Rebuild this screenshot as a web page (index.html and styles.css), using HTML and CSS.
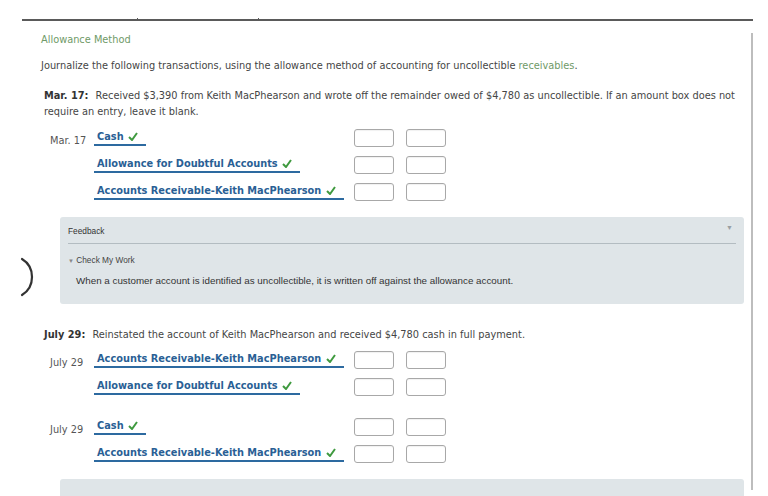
FILE: index.html
```html
<!DOCTYPE html>
<html>
<head>
<meta charset="utf-8">
<link rel="stylesheet" href="styles.css">
</head>
<body>
<div class="topbar"><span class="tick t1"></span><span class="tick t2"></span></div>
<svg class="paren" width="16" height="40" viewBox="0 0 16 40"><path d="M3 2 Q13 8 13 20 Q13 32 3 38" fill="none" stroke="#333" stroke-width="2.2" stroke-linecap="round"/></svg>
<div class="page">
  <div class="title">Allowance Method</div>
  <p class="intro">Journalize the following transactions, using the allowance method of accounting for uncollectible <span class="green">receivables</span>.</p>
  <p class="task"><b>Mar. 17:</b> Received $3,390 from Keith MacPhearson and wrote off the remainder owed of $4,780 as uncollectible. If an amount box does not require an entry, leave it blank.</p>

  <div class="journal j1">
    <div class="row">
      <div class="date">Mar. 17</div>
      <div class="acct"><span class="link">Cash <svg class="ok" width="10" height="9" viewBox="0 0 10 9"><path d="M1 5 L4 8 L9 1" fill="none" stroke="#3f9a3f" stroke-width="2"/></svg></span></div>
      <span class="box"></span><span class="box"></span>
    </div>
    <div class="row">
      <div class="date"></div>
      <div class="acct"><span class="link">Allowance for Doubtful Accounts <svg class="ok" width="10" height="9" viewBox="0 0 10 9"><path d="M1 5 L4 8 L9 1" fill="none" stroke="#3f9a3f" stroke-width="2"/></svg></span></div>
      <span class="box"></span><span class="box"></span>
    </div>
    <div class="row">
      <div class="date"></div>
      <div class="acct"><span class="link">Accounts Receivable-Keith MacPhearson <svg class="ok" width="10" height="9" viewBox="0 0 10 9"><path d="M1 5 L4 8 L9 1" fill="none" stroke="#3f9a3f" stroke-width="2"/></svg></span></div>
      <span class="box"></span><span class="box"></span>
    </div>
  </div>

  <div class="feedback">
    <div class="fb-head">Feedback<span class="fb-arrow">▼</span></div>
    <div class="fb-sub"><span class="tri">▼</span> Check My Work</div>
    <div class="fb-text">When a customer account is identified as uncollectible, it is written off against the allowance account.</div>
  </div>

  <p class="task task2"><b>July 29:</b> Reinstated the account of Keith MacPhearson and received $4,780 cash in full payment.</p>

  <div class="journal j2">
    <div class="row">
      <div class="date">July 29</div>
      <div class="acct"><span class="link">Accounts Receivable-Keith MacPhearson <svg class="ok" width="10" height="9" viewBox="0 0 10 9"><path d="M1 5 L4 8 L9 1" fill="none" stroke="#3f9a3f" stroke-width="2"/></svg></span></div>
      <span class="box"></span><span class="box"></span>
    </div>
    <div class="row">
      <div class="date"></div>
      <div class="acct"><span class="link">Allowance for Doubtful Accounts <svg class="ok" width="10" height="9" viewBox="0 0 10 9"><path d="M1 5 L4 8 L9 1" fill="none" stroke="#3f9a3f" stroke-width="2"/></svg></span></div>
      <span class="box"></span><span class="box"></span>
    </div>
  </div>
  <div class="journal j3">
    <div class="row">
      <div class="date">July 29</div>
      <div class="acct"><span class="link">Cash <svg class="ok" width="10" height="9" viewBox="0 0 10 9"><path d="M1 5 L4 8 L9 1" fill="none" stroke="#3f9a3f" stroke-width="2"/></svg></span></div>
      <span class="box"></span><span class="box"></span>
    </div>
    <div class="row">
      <div class="date"></div>
      <div class="acct"><span class="link">Accounts Receivable-Keith MacPhearson <svg class="ok" width="10" height="9" viewBox="0 0 10 9"><path d="M1 5 L4 8 L9 1" fill="none" stroke="#3f9a3f" stroke-width="2"/></svg></span></div>
      <span class="box"></span><span class="box"></span>
    </div>
  </div>
  <div class="feedback bottom"></div>
</div>
</body>
</html>
```

FILE: styles.css
```css
html, body {
  margin: 0;
  padding: 0;
  background: #fff;
  width: 768px;
  height: 496px;
  overflow: hidden;
}
body {
  font-family: "DejaVu Sans", Verdana, sans-serif;
  color: #454545;
  position: relative;
}
.topbar {
  margin: 19px 0 0 22px;
  width: 731px;
  height: 0;
  border-top: 2px solid #5a5a5a;
  position: relative;
}
.tick {
  position: absolute;
  top: -3px;
  width: 1px;
  height: 2px;
  background: #5a5a5a;
}
.t1 { left: 115px; }
.t2 { left: 236px; }
.paren {
  position: absolute;
  left: 19px;
  top: 257px;
}
.page {
  margin: 12px 0 0 22px;
  width: 710px;
  height: 457px;
  border-right: 2px solid #bdbdbd;
  padding: 0 0 0 19px;
}
.title {
  font-size: 9.8px;
  line-height: 12px;
  padding-top: 1px;
  color: #6f9a67;
}
.intro {
  margin: 13px 0 0 0;
  font-size: 9.8px;
  line-height: 14px;
}
.green { color: #6f9a67; }
.task {
  margin: 15px 0 0 3px;
  font-size: 9.8px;
  line-height: 16px;
  width: 705px;
}
.task b {
  color: #333;
  font-weight: bold;
  margin-right: 4px;
}
.journal { margin-left: 9px; }
.j1 { margin-top: 7px; }
.row {
  display: flex;
  align-items: flex-start;
  height: 27px;
}
.date {
  width: 44px;
  font-size: 9.8px;
  padding-top: 7px;
  line-height: 14px;
  color: #555;
}
.acct {
  width: 260px;
  margin-top: -2px;
}
.link {
  display: inline-block;
  font-weight: bold;
  font-size: 9.8px;
  line-height: 11px;
  color: #2a5f95;
  border-bottom: 2px solid #2d6aa0;
  padding: 0 8px 2px 3px;
}
.ok {
  display: inline-block;
  vertical-align: -1px;
  margin-left: 1px;
}
.box {
  width: 38px;
  height: 16px;
  border: 1px solid #a8a8a8;
  border-radius: 3px;
  margin-top: 2px;
  margin-right: 12px;
  box-shadow: inset 0 1px 1px rgba(0,0,0,0.06);
}
.feedback {
  margin: 9px 0 0 19px;
  width: 684px;
  background: #dfe5e8;
  border-radius: 3px;
  height: 87px;
  font-family: "Liberation Sans", Arial, sans-serif;
}
.fb-head {
  margin: 0 8px;
  padding-top: 10px;
  height: 16px;
  font-size: 8.3px;
  line-height: 8px;
  color: #333;
  border-bottom: 1px solid #b3bcc1;
  position: relative;
}
.fb-arrow {
  position: absolute;
  right: 3px;
  top: 7px;
  font-size: 7px;
  color: #9a9fa3;
}
.fb-sub {
  margin: 11px 8px 0 8px;
  font-size: 8.3px;
  line-height: 10px;
  color: #444;
}
.tri { font-size: 6px; color: #888; }
.fb-text {
  margin: 9px 0 0 16px;
  font-size: 9.8px;
  line-height: 12px;
  color: #333;
}
.task2 { margin-top: 23px; }
.j2 { margin-top: 6px; }
.j3 { margin-top: 13px; }
.bottom {
  margin-top: 9px;
  height: 30px;
}
```
